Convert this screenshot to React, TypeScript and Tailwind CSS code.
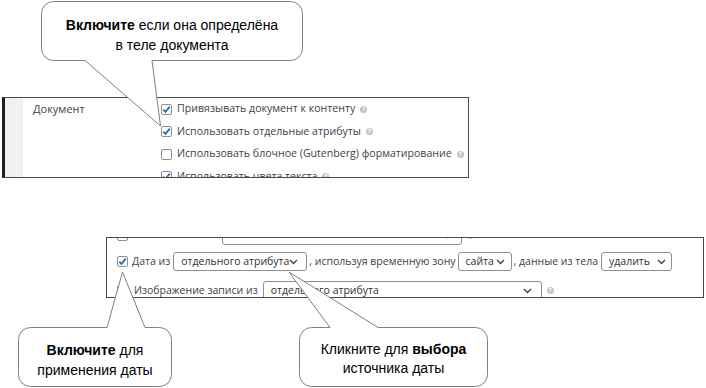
import React from "react";

const panelFont = { fontFamily: '"Open Sans", "Noto Sans", sans-serif' };
const calloutFont = { fontFamily: '"Liberation Sans", Arial, sans-serif' };

function Checkbox({ checked }: { checked?: boolean }) {
  return (
    <span className="w-[11px] h-[11px] shrink-0 rounded-[2px] border border-[#8c8f94] bg-white flex items-center justify-center">
      {checked && (
        <svg width="9" height="9" viewBox="0 0 9 9">
          <path d="M1.3 4.6 L3.5 6.9 L7.8 1.6" fill="none" stroke="#2271b1" strokeWidth="1.7" />
        </svg>
      )}
    </span>
  );
}

function Help() {
  return (
    <span className="ml-[5px] w-[7px] h-[7px] shrink-0 rounded-full bg-[#c3c4c7] text-white text-[6px] leading-[7px] text-center font-bold">
      ?
    </span>
  );
}

function Chevron() {
  return (
    <svg width="9" height="6" viewBox="0 0 9 6" className="shrink-0">
      <path d="M1 1 L4.5 4.5 L8 1" fill="none" stroke="#3c434a" strokeWidth="1.4" />
    </svg>
  );
}

function Select({ label, className }: { label: string; className: string }) {
  return (
    <span
      className={
        "h-[19px] shrink-0 rounded-[3px] border border-[#8c8f94] bg-white flex items-center justify-between pl-[7px] text-[#2c3338] " +
        className
      }
    >
      <span>{label}</span>
      <Chevron />
    </span>
  );
}

const topOptions = [
  { label: "Привязывать документ к контенту", checked: true },
  { label: "Использовать отдельные атрибуты", checked: true },
  { label: "Использовать блочное (Gutenberg) форматирование", checked: false },
  { label: "Использовать цвета текста", checked: true },
];

export default function App() {
  return (
    <div className="relative w-[706px] h-[388px] overflow-hidden bg-white">
      <div className="pt-[97px]">
        {/* top settings fragment */}
        <div
          className="ml-[2px] w-[467px] h-[81px] border-y border-r border-[#4a4a4a] border-l-[3px] border-l-[#1e1e1e] flex overflow-hidden text-[10.6px] text-[#3c434a]"
          style={panelFont}
        >
          <div className="w-[18px] shrink-0 bg-[#f0f0f1]" />
          <div className="w-[138px] shrink-0 pl-[10px] text-[11px]">
            <div className="h-[22.5px] flex items-center">Документ</div>
          </div>
          <div className="flex flex-col">
            {topOptions.map((o) => (
              <div key={o.label} className="h-[22.5px] shrink-0 flex items-center whitespace-nowrap">
                <Checkbox checked={o.checked} />
                <span className="ml-[5px]">{o.label}</span>
                <Help />
              </div>
            ))}
          </div>
        </div>

        {/* bottom settings fragment */}
        <div
          className="mt-[59px] ml-[106px] w-[598px] h-[61px] border border-[#4a4a4a] overflow-hidden pl-[10px] text-[10.5px] text-[#3c434a] whitespace-nowrap"
          style={panelFont}
        >
          <div className="-mt-[12px] h-[19px] flex items-center">
            <Checkbox />
            <Select label="" className="ml-[94px] w-[240px] pr-[9px]" />
            <Help />
          </div>
          <div className="mt-[7px] h-[19px] flex items-center">
            <Checkbox checked />
            <span className="ml-[4px] mr-[3px]">Дата из</span>
            <Select label="отдельного атрибута" className="w-[134px] pr-[10px]" />
            <span className="ml-[2px] mr-[2px]">, используя временную зону</span>
            <Select label="сайта" className="w-[54px] pr-[6px]" />
            <span className="ml-[2px] mr-[3px]">, данные из тела</span>
            <Select label="удалить" className="w-[71px] pr-[5px]" />
          </div>
          <div className="mt-[10px] h-[19px] flex items-center">
            <Checkbox />
            <span className="ml-[6px] mr-[5px]">Изображение записи из</span>
            <Select label="отдельного атрибута" className="w-[279px] pr-[9px]" />
            <Help />
          </div>
        </div>
      </div>

      {/* callout shapes */}
      <svg className="absolute left-0 top-0 pointer-events-none" width="706" height="388" viewBox="0 0 706 388">
        <g fill="#fff" stroke="#808080" strokeWidth="1">
          <path d="M53.5 1.5 H290.5 A12 12 0 0 1 302.5 13.5 V48.5 A12 12 0 0 1 290.5 60.5 H152 L160.5 126 L85 60.5 H53.5 A12 12 0 0 1 41.5 48.5 V13.5 A12 12 0 0 1 53.5 1.5 Z" />
          <path d="M30.5 327.5 H107 L122.5 272 L145 327.5 H159.5 A12 12 0 0 1 171.5 339.5 V374.5 A12 12 0 0 1 159.5 386.5 H30.5 A12 12 0 0 1 18.5 374.5 V339.5 A12 12 0 0 1 30.5 327.5 Z" />
          <path d="M311.5 327.5 H330 L289 272 L378 327.5 H475.5 A12 12 0 0 1 487.5 339.5 V374.5 A12 12 0 0 1 475.5 386.5 H311.5 A12 12 0 0 1 299.5 374.5 V339.5 A12 12 0 0 1 311.5 327.5 Z" />
        </g>
      </svg>

      {/* callout texts */}
      <div
        className="absolute left-[41px] top-[15px] w-[262px] text-center text-[14px] leading-[20px] text-black"
        style={calloutFont}
      >
        <b>Включите</b> если она определёна
        <br />в теле документа
      </div>
      <div
        className="absolute left-[18px] top-[340px] w-[154px] text-center text-[14px] leading-[20px] text-black"
        style={calloutFont}
      >
        <b>Включите</b> для
        <br />
        применения даты
      </div>
      <div
        className="absolute left-[299px] top-[340px] w-[189px] text-center text-[14px] leading-[19px] text-black"
        style={calloutFont}
      >
        Кликните для <b>выбора</b>
        <br />
        источника даты
      </div>
    </div>
  );
}
